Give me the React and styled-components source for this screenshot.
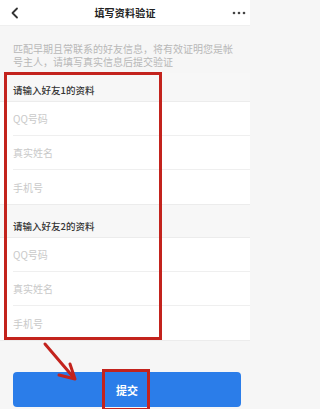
import React from "react";
import styled, { createGlobalStyle } from "styled-components";

const Global = createGlobalStyle`
  html, body { margin: 0; padding: 0; }
  body {
    background: #f6f6f6;
    font-family: "Noto Sans CJK SC", "Noto Sans", sans-serif;
    overflow: hidden;
  }
  * { box-sizing: border-box; }
`;

const RED = "#c3231d";

const Page = styled.div`
  width: 250px;
  height: 409px;
  display: flex;
  flex-direction: column;
  background: #f6f6f6;
  overflow: hidden;
`;

const NavBar = styled.div`
  height: 26px;
  flex: none;
  background: #fff;
  display: grid;
  grid-template-columns: 40px 1fr 40px;
  align-items: center;
  border-bottom: 1px solid #efefef;
`;

const NavSide = styled.div`
  display: flex;
  align-items: center;
  justify-content: ${(p) => (p.$right ? "flex-end" : "flex-start")};
  padding: ${(p) => (p.$right ? "0 4px 0 0" : "0 0 0 10px")};
`;

const Title = styled.div`
  text-align: center;
  font-size: 10px;
  font-weight: 700;
  color: #222;
  letter-spacing: 0.2px;
`;

const Notice = styled.div`
  height: 47px;
  flex: none;
  padding: 16px 12px 0 13px;
  font-size: 10px;
  line-height: 13px;
  color: #b8b8b8;
`;

const FormArea = styled.div`
  position: relative;
  flex: none;
`;

const Section = styled.div``;

const SectionTitle = styled.div`
  height: ${(p) => p.$h}px;
  display: flex;
  align-items: flex-end;
  padding: 0 0 5px 13px;
  font-size: 9.5px;
  line-height: 12px;
  font-weight: 500;
  color: #333;
  background: #f7f7f7;
  border-bottom: 1px solid #ececec;
`;

const Group = styled.div`
  background: #fff;
  border-bottom: 1px solid #ececec;
`;

const Field = styled.label`
  display: flex;
  align-items: center;
  height: 34px;
  margin-left: 13px;
  border-bottom: ${(p) => (p.$last ? "none" : "1px solid #efefef")};
`;

const Input = styled.input`
  border: none;
  outline: none;
  width: 100%;
  padding: 0;
  background: transparent;
  font-family: "Noto Sans CJK SC", "Noto Sans", sans-serif;
  font-size: 10px;
  color: #333;
  &::placeholder { color: #c9c9c9; }
`;

const Footer = styled.div`
  position: relative;
  flex: 1;
  padding: 31px 9px 0 13px;
`;

const SubmitButton = styled.button`
  position: relative;
  width: 100%;
  height: 35px;
  border: none;
  border-radius: 4px;
  background: #2b7de9;
  color: #fff;
  font-family: "Noto Sans CJK SC", "Noto Sans", sans-serif;
  font-size: 11px;
  font-weight: 700;
  display: flex;
  align-items: center;
  justify-content: center;
  padding: 0;
`;

const Highlight = styled.div`
  position: absolute;
  left: ${(p) => p.$l}px;
  top: ${(p) => p.$t}px;
  width: ${(p) => p.$w}px;
  height: ${(p) => p.$h}px;
  border: ${(p) => p.$b}px solid ${RED};
  pointer-events: none;
`;

const Arrow = styled.svg`
  position: absolute;
  left: 0;
  top: 0;
  overflow: visible;
`;

const sections = [
  { title: "请输入好友1的资料", h: 29 },
  { title: "请输入好友2的资料", h: 33 },
];
const fields = ["QQ号码", "真实姓名", "手机号"];

export default function App() {
  return (
    <>
      <Global />
      <Page>
        <NavBar>
          <NavSide>
            <svg width="10" height="12" viewBox="0 0 10 12">
              <polyline points="7,1.5 2.5,6 7,10.5" fill="none" stroke="#333" strokeWidth="1.8" strokeLinecap="round" strokeLinejoin="round" />
            </svg>
          </NavSide>
          <Title>填写资料验证</Title>
          <NavSide $right>
            <svg width="14" height="4" viewBox="0 0 14 4">
              <circle cx="2" cy="2" r="1.3" fill="#444" />
              <circle cx="7" cy="2" r="1.3" fill="#444" />
              <circle cx="12" cy="2" r="1.3" fill="#444" />
            </svg>
          </NavSide>
        </NavBar>
        <Notice>匹配早期且常联系的好友信息，将有效证明您是帐号主人，请填写真实信息后提交验证</Notice>
        <FormArea>
          {sections.map((s) => (
            <Section key={s.title}>
              <SectionTitle $h={s.h}>{s.title}</SectionTitle>
              <Group>
                {fields.map((f, i) => (
                  <Field key={f} $last={i === fields.length - 1}>
                    <Input placeholder={f} />
                  </Field>
                ))}
              </Group>
            </Section>
          ))}
          <Highlight $l={4} $t={-1} $w={158} $h={268} $b={3.5} />
        </FormArea>
        <Footer>
          <SubmitButton>
            提交
            <Highlight $l={89} $t={-3} $w={48} $h={42} $b={3} />
          </SubmitButton>
          <Arrow width="250" height="70">
            <g stroke={RED} strokeWidth="3" fill="none" strokeLinecap="round" strokeLinejoin="round">
              <line x1="45" y1="3" x2="74" y2="37" />
              <polyline points="70,23 75,38 59,34" />
            </g>
          </Arrow>
        </Footer>
      </Page>
    </>
  );
}
